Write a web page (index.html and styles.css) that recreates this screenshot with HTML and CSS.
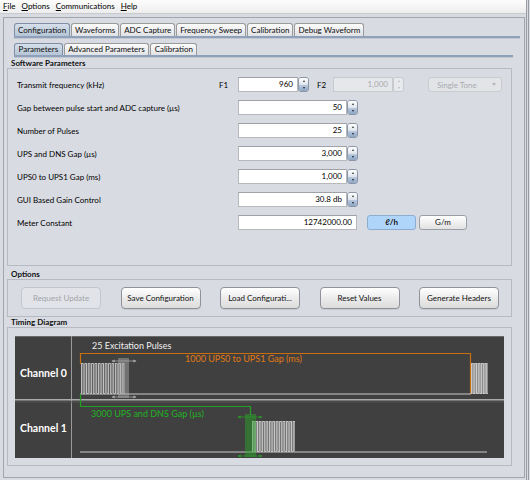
FILE: index.html
```html
<!DOCTYPE html>
<html lang="en">
<head>
    <meta charset="UTF-8">
    <title>Configuration</title>
    <link rel="stylesheet" href="styles.css">
</head>
<body>
<div class="window">
    <div class="menubar">
        <span class="menu"><u>F</u>ile</span>
        <span class="menu"><u>O</u>ptions</span>
        <span class="menu"><u>C</u>ommunications</span>
        <span class="menu"><u>H</u>elp</span>
    </div>
    <div class="frame">
        <div class="tabs top-tabs">
            <span class="tab active">Configuration</span>
            <span class="tab">Waveforms</span>
            <span class="tab">ADC Capture</span>
            <span class="tab">Frequency Sweep</span>
            <span class="tab">Calibration</span>
            <span class="tab">Debug Waveform</span>
        </div>
        <div class="tabline wide"></div>
        <div class="tabs sub-tabs">
            <span class="tab active">Parameters</span>
            <span class="tab">Advanced Parameters</span>
            <span class="tab">Calibration</span>
        </div>
        <div class="tabline narrow"></div>

        <div class="title first">Software Parameters</div>
        <div class="box params">
            <div class="row">
                <span class="label short-label">Transmit frequency (kHz)</span>
                <span class="tag">F1</span>
                <div class="spin">
                    <span class="field short">960</span>
                    <span class="arrows"><i class="up"></i><i class="down"></i></span>
                </div>
                <span class="tag f2">F2</span>
                <div class="spin off">
                    <span class="field short">1,000</span>
                    <span class="arrows"><i class="up"></i><i class="down"></i></span>
                </div>
                <div class="combo">Single Tone<span class="caret"></span></div>
            </div>
            <div class="row">
                <span class="label">Gap between pulse start and ADC capture (µs)</span>
                <div class="spin">
                    <span class="field">50</span>
                    <span class="arrows"><i class="up"></i><i class="down"></i></span>
                </div>
            </div>
            <div class="row">
                <span class="label">Number of Pulses</span>
                <div class="spin">
                    <span class="field">25</span>
                    <span class="arrows"><i class="up"></i><i class="down"></i></span>
                </div>
            </div>
            <div class="row">
                <span class="label">UPS and DNS Gap (µs)</span>
                <div class="spin">
                    <span class="field">3,000</span>
                    <span class="arrows"><i class="up"></i><i class="down"></i></span>
                </div>
            </div>
            <div class="row">
                <span class="label">UPS0 to UPS1 Gap (ms)</span>
                <div class="spin">
                    <span class="field">1,000</span>
                    <span class="arrows"><i class="up"></i><i class="down"></i></span>
                </div>
            </div>
            <div class="row">
                <span class="label">GUI Based Gain Control</span>
                <div class="spin">
                    <span class="field">30.8 db</span>
                    <span class="arrows"><i class="up"></i><i class="down"></i></span>
                </div>
            </div>
            <div class="row">
                <span class="label">Meter Constant</span>
                <span class="field meter">12742000.00</span>
                <button class="unit on">ℓ/h</button>
                <button class="unit gm">G/m</button>
            </div>
        </div>

        <div class="title">Options</div>
        <div class="box options">
            <button class="btn off">Request Update</button>
            <button class="btn">Save Configuration</button>
            <button class="btn">Load Configurati...</button>
            <button class="btn">Reset Values</button>
            <button class="btn">Generate Headers</button>
        </div>

        <div class="title tight">Timing Diagram</div>
        <div class="box timing">
            <svg class="diagram" width="489" height="122" viewBox="0 0 489 122">
                <defs>
                    <pattern id="wave" width="3.4" height="31" patternUnits="userSpaceOnUse">
                        <path d="M0.4 31 V0.4 H2.1 V30.6 H3.4" fill="none" stroke="#dcdcdc" stroke-width="0.8"/>
                    </pattern>
                    <marker id="tip" viewBox="0 0 6 6" refX="5" refY="3" markerWidth="4" markerHeight="4" orient="auto-start-reverse">
                        <path d="M0 0 L6 3 L0 6 z" fill="#a6a6a6"/>
                    </marker>
                    <marker id="gtip" viewBox="0 0 6 6" refX="5" refY="3" markerWidth="4" markerHeight="4" orient="auto-start-reverse">
                        <path d="M0 0 L6 3 L0 6 z" fill="#2a9a2a"/>
                    </marker>
                </defs>
                <rect width="489" height="122" fill="#404040"/>
                <line x1="0" y1="0.5" x2="489" y2="0.5" stroke="#6a6a6a"/>
                <line x1="56.5" y1="0" x2="56.5" y2="122" stroke="#9a9a9a"/>
                <line x1="0" y1="63.8" x2="489" y2="63.8" stroke="#ababab" stroke-width="1.4"/>
                <line x1="0" y1="66" x2="489" y2="66" stroke="#555"/>

                <text x="5" y="41" class="ch">Channel 0</text>
                <text x="5" y="96" class="ch">Channel 1</text>

                <!-- channel 0 -->
                <text x="77" y="12.5" class="note">25 Excitation Pulses</text>
                <path d="M65.5 28 V17.5 H455.5 V58" fill="none" stroke="#c8700f" stroke-width="1.2"/>
                <text x="170" y="26" class="note orange">1000 UPS0 to UPS1 Gap (ms)</text>
                <line x1="65" y1="58" x2="456" y2="58" stroke="#c8c8c8" stroke-width="1.2"/>
                <g transform="translate(66,27)">
                    <rect width="44" height="31" fill="#565656"/>
                    <rect width="44" height="31" fill="url(#wave)"/>
                </g>
                <rect x="103" y="22" width="11" height="40" fill="rgba(175,175,175,0.45)"/>
                <line x1="97" y1="25" x2="121" y2="25" stroke="#a6a6a6" stroke-width="0.8" marker-start="url(#tip)" marker-end="url(#tip)"/>
                <line x1="97" y1="61" x2="121" y2="61" stroke="#a6a6a6" stroke-width="0.8" marker-start="url(#tip)" marker-end="url(#tip)"/>
                <g transform="translate(456,27)">
                    <rect width="17" height="31" fill="#858585"/>
                    <rect width="17" height="31" fill="url(#wave)"/>
                </g>

                <!-- channel 1 -->
                <path d="M65.5 58 V70.5 H235.5 V79" fill="none" stroke="#23a023" stroke-width="1.2"/>
                <text x="76" y="80.5" class="note green">3000 UPS and DNS Gap (µs)</text>
                <line x1="65" y1="116" x2="472" y2="116" stroke="#c8c8c8" stroke-width="1.2"/>
                <g transform="translate(237,85)">
                    <rect width="43" height="31" fill="#6c6c6c"/>
                    <rect width="43" height="31" fill="url(#wave)"/>
                </g>
                <rect x="230" y="78" width="11" height="43" fill="rgba(40,170,40,0.45)"/>
                <line x1="223" y1="81" x2="247" y2="81" stroke="#2a9a2a" stroke-width="0.8" marker-start="url(#gtip)" marker-end="url(#gtip)"/>
                <line x1="223" y1="120" x2="247" y2="120" stroke="#2a9a2a" stroke-width="0.8" marker-start="url(#gtip)" marker-end="url(#gtip)"/>
            </svg>
        </div>
    </div>
</div>
</body>
</html>
```

FILE: styles.css
```css
body {
    margin: 0;
    background-color: #d8dbe2;
    font-family: Lato, "Liberation Sans", sans-serif;
    font-size: 8px;
    color: #111;
}
.window {
    width: 526px;
    height: 480px;
    border-right: 3px double #9a9ca2;
    overflow: hidden;
}
.menubar {
    display: flex;
    gap: 6px;
    height: 13px;
    line-height: 13px;
    padding-left: 3px;
    background: linear-gradient(#fdfdfd, #ededed);
    border-bottom: 1px solid #c9cacd;
    color: #000;
}
.menu u {
    text-decoration: underline;
}
.frame {
    margin: 3px 0 0 3px;
    width: 522px;
    height: 461px;
    box-sizing: border-box;
    border: 1px solid #a2a5ab;
    padding: 5px 0 0 3px;
}
.tabs {
    display: flex;
    gap: 1px;
    margin-left: 7px;
}
.tab {
    height: 13px;
    line-height: 12px;
    padding: 0 3px;
    box-sizing: border-box;
    border: 1px solid #9a9a9a;
    border-bottom: none;
    border-radius: 3px 3px 0 0;
    background: linear-gradient(#fbfbfb, #e1e2e5);
    color: #0c0c0c;
}
.tab.active {
    background: linear-gradient(#d6dfea, #b6c5d7);
    border-color: #7e8ea5;
}
.sub-tabs {
    margin-top: 4px;
}
.sub-tabs .tab {
    height: 12px;
    line-height: 11px;
    padding: 0 3.5px;
}
.tabline {
    height: 2px;
    margin-left: 7px;
    background: #8fa1ba;
    border-bottom: 1px solid #c3c8d0;
}
.tabline.wide {
    width: 506px;
}
.tabline.narrow {
    width: 499px;
}
.title {
    height: 10px;
    line-height: 10px;
    padding-left: 4px;
    font-weight: bold;
    color: #111;
    margin-top: 3px;
}
.title.first {
    margin-top: 0;
}
.title.tight {
    margin-top: 0;
}
.box {
    width: 505px;
    box-sizing: border-box;
    border: 1px solid #b7bac0;
}
.params {
    height: 198px;
    padding: 8px 0 0 9px;
    display: flex;
    flex-direction: column;
    gap: 8px;
}
.row {
    display: flex;
    align-items: center;
    height: 15px;
}
.label {
    width: 221px;
    color: #000;
}
.label.short-label {
    width: 202px;
}
.tag {
    width: 19px;
    color: #000;
}
.tag.f2 {
    width: 16px;
    margin-left: 8px;
}
.spin {
    display: flex;
}
.field {
    display: block;
    width: 109px;
    height: 15px;
    box-sizing: border-box;
    background: #fff;
    border: 1px solid #b6b8bc;
    border-top-color: #9fa1a6;
    text-align: right;
    padding-right: 4px;
    line-height: 13px;
    color: #000;
}
.field.short {
    width: 60px;
}
.field.meter {
    width: 119px;
}
.arrows {
    display: flex;
    flex-direction: column;
    width: 11px;
    height: 15px;
    box-sizing: border-box;
    border: 1px solid #8b95a5;
    border-radius: 3px;
    overflow: hidden;
}
.arrows i {
    flex: 1;
    display: flex;
    align-items: center;
    justify-content: center;
}
.arrows .up {
    background: linear-gradient(#ffffff, #dde3ea);
}
.arrows .down {
    background: linear-gradient(#b9cadf, #8ea7c6);
}
.arrows .up::after {
    content: "";
    border-left: 1.5px solid transparent;
    border-right: 1.5px solid transparent;
    border-bottom: 2px solid #333;
}
.arrows .down::after {
    content: "";
    border-left: 1.5px solid transparent;
    border-right: 1.5px solid transparent;
    border-top: 2px solid #222;
}
.spin.off .field {
    background: #e6e7ea;
    border-color: #c8cace;
    color: #a8a9ad;
}
.spin.off .arrows {
    border-color: #c7cacf;
}
.spin.off .arrows i {
    background: #e8e9ec;
}
.spin.off .arrows i::after {
    border-top-color: #bbb;
    border-bottom-color: #bbb;
}
.combo {
    display: flex;
    justify-content: space-between;
    align-items: center;
    width: 74px;
    height: 15px;
    box-sizing: border-box;
    margin-left: 24px;
    padding: 0 5px 0 8px;
    border: 1px solid #c9cbcf;
    border-radius: 3px;
    background: #e3e4e8;
    color: #a9aaae;
}
.caret {
    border-left: 2px solid transparent;
    border-right: 2px solid transparent;
    border-top: 3px solid #b5b6ba;
}
.unit {
    width: 49px;
    height: 15px;
    margin-left: 10px;
    padding: 0;
    box-sizing: border-box;
    border: 1px solid #9ba0a8;
    border-radius: 3px;
    background: linear-gradient(#ffffff, #e2e2e2);
    font: inherit;
    color: #111;
    line-height: 13px;
}
.unit.on {
    background: #b0d5fb;
    border-color: #8cadd2;
    font-weight: bold;
}
.unit.gm {
    width: 48px;
    margin-left: 3px;
}
.options {
    height: 38px;
    padding: 7px 0 0 13px;
    display: flex;
    gap: 19.5px;
}
.btn {
    width: 80px;
    height: 22px;
    padding: 0;
    box-sizing: border-box;
    border: 1px solid #8f9298;
    border-radius: 4px;
    background: linear-gradient(#ffffff, #e8e8e8 60%, #dcdcdc);
    box-shadow: 0 1px 0 rgba(0, 0, 0, 0.08);
    font: inherit;
    color: #111;
}
.btn.off {
    background: #e1e3e8;
    border-color: #c4c6cb;
    color: #a2a4a9;
    box-shadow: none;
}
.timing {
    height: 139px;
    padding: 8px 7px 0 7px;
}
.diagram {
    display: block;
}
.diagram .ch {
    fill: #fff;
    font-weight: bold;
    font-size: 10.5px;
}
.diagram .note {
    fill: #f0f0f0;
    font-size: 9px;
}
.diagram .orange {
    fill: #e27b12;
}
.diagram .green {
    fill: #22b322;
}
```
